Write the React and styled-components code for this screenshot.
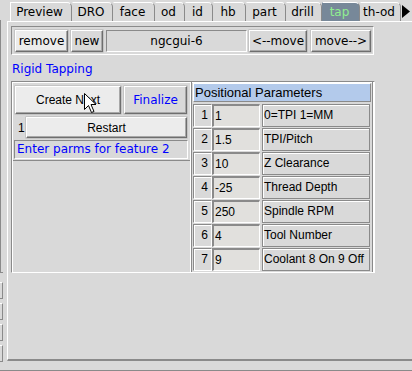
import styled, { createGlobalStyle } from "styled-components"

const Global = createGlobalStyle`
    html, body {
        margin: 0;
        padding: 0;
        background: #d9d9d9;
        overflow: hidden;
    }
    * {
        box-sizing: border-box;
    }
`

const DEJAVU = `"DejaVu Sans", "Noto Sans", sans-serif`
const ARIAL = `"Liberation Sans", Arial, sans-serif`
const DARK = "#8a8a8a"

const Screen = styled.div`
    position: relative;
    display: flex;
    width: 412px;
    height: 371px;
    border-bottom: 1px solid ${DARK};
    background: #d9d9d9;
`

const Strip = styled.div`
    display: flex;
    flex-direction: column;
    gap: 4px;
    width: 3px;
    padding-top: 20px;
`

const StripLine = styled.div`
    width: 3px;
    height: 253px;
    border-left: 1px solid ${DARK};
    border-bottom: 1px solid ${DARK};
    margin-bottom: 5px;
`

const StripBox = styled.div`
    width: 3px;
    height: 17px;
    border-top: 1px solid #fff;
    border-right: 1px solid ${DARK};
    border-bottom: 1px solid ${DARK};
`

const Notebook = styled.div`
    display: flex;
    flex-direction: column;
    margin-left: 4px;
    width: 405px;
`

const TabBar = styled.div`
    display: flex;
    align-items: flex-end;
    height: 21px;
    padding-left: 3px;
`

const Tab = styled.div`
    width: ${p => p.$w}px;
    height: 19px;
    display: flex;
    align-items: center;
    justify-content: center;
    padding-right: 3px;
    font-family: ${DEJAVU};
    font-size: 12px;
    color: ${p => p.$active ? "#90ee90" : "#000"};
    background: ${p => p.$active ? "#778899" : "#d9d9d9"};
    border-top: 1px solid #fff;
    border-left: 1px solid ${p => p.$first ? "#fff" : "transparent"};
    border-right: 1px solid ${DARK};
    border-top-right-radius: 5px;
`

const Arrow = styled.div`
    display: flex;
    align-items: center;
    width: 10px;
    height: 19px;
    margin-left: 1px;
`

const Page = styled.div`
    display: flex;
    flex-direction: column;
    height: 340px;
    padding: 4px 0 0 3px;
    border-top: 1px solid #fff;
    border-left: 1px solid #fff;
    border-bottom: 2px solid ${DARK};
`

const Toolbar = styled.div`
    display: flex;
    align-items: center;
    gap: 3px;
    width: 363px;
    height: 29px;
    padding: 2px 2px 2px 3px;
    border: 1px solid;
    border-color: ${DARK} #fff #fff ${DARK};
`

const Button = styled.button`
    flex: none;
    width: ${p => p.$w}px;
    height: ${p => p.$h || 22}px;
    padding: 0;
    margin-left: ${p => p.$ml || 0}px;
    background: ${p => p.$light ? "#ececec" : "#d9d9d9"};
    border: 1px solid;
    border-color: #fff #6e6e6e #6e6e6e #fff;
    box-shadow: inset -1px -1px 0 #a8a8a8, 0 0 0 0.5px #b0b0b0;
    font-family: ${p => p.$arial ? ARIAL : DEJAVU};
    font-size: 12px;
    color: ${p => p.$blue ? "#0000ff" : "#000"};
    cursor: pointer;
`

const NameField = styled.div`
    flex: none;
    width: 141px;
    height: 22px;
    display: flex;
    align-items: center;
    justify-content: center;
    border: 1px solid;
    border-color: ${DARK} #fff #fff ${DARK};
    font-family: ${DEJAVU};
    font-size: 12px;
`

const Title = styled.div`
    height: 26px;
    padding: 7px 0 0 1px;
    line-height: 14px;
    font-family: ${DEJAVU};
    font-size: 12px;
    color: #0000ff;
`

const Frame = styled.div`
    display: flex;
    width: 364px;
    height: 192px;
    padding: 1px 0 0 1px;
    border: 1px solid;
    border-color: ${DARK} #fff #fff ${DARK};
    box-shadow: inset 1px 1px 0 #fff;
`

const Controls = styled.div`
    display: flex;
    flex-direction: column;
    width: 177px;
    height: 78px;
    padding: 3px 0 0 1px;
    border-bottom: 1px solid ${DARK};
`

const ButtonRow = styled.div`
    display: flex;
    align-items: center;
    gap: 3px;
    padding-left: ${p => p.$pl || 0}px;
    margin-bottom: ${p => p.$mb || 0}px;
`

const Count = styled.div`
    width: 12px;
    padding-left: 4px;
    font-family: ${ARIAL};
    font-size: 12px;
`

const Status = styled.div`
    width: 174px;
    height: 19px;
    padding-left: 2px;
    line-height: 17px;
    border: 1px solid;
    border-color: ${DARK} #fff #fff ${DARK};
    font-family: ${DEJAVU};
    font-size: 12px;
    color: #0000ff;
`

const Params = styled.div`
    display: flex;
    flex-direction: column;
    gap: 1px;
    width: 184px;
    margin-left: auto;
    margin-top: -1px;
    padding: 1px 3px 0 2px;
    border-left: 1px solid #fff;
    box-shadow: inset 1px 0 0 ${DARK}, inset -1px 0 0 #fff, inset -2px 0 0 ${DARK};
`

const Header = styled.div`
    height: 19px;
    margin-bottom: 1px;
    padding-left: 1px;
    line-height: 18px;
    background: #b3caeb;
    border: 1px solid;
    border-color: #fff ${DARK} ${DARK} #fff;
    font-family: ${ARIAL};
    font-size: 13px;
`

const Row = styled.div`
    display: flex;
    height: 23px;
    font-family: ${ARIAL};
    font-size: 12px;
`

const Num = styled.div`
    width: 19px;
    padding-right: 3px;
    text-align: right;
    line-height: 21px;
    border: 1px solid;
    border-color: ${DARK} #fff #fff ${DARK};
    box-shadow: inset 1px 1px 0 #fff;
`

const Value = styled.div`
    width: 48px;
    padding-left: 1px;
    line-height: 20px;
    background: #e1e0dd;
    border-style: solid;
    border-width: 2px 1px 1px 2px;
    border-color: ${DARK} #fff #fff ${DARK};
`

const Desc = styled.div`
    width: 108px;
    margin-left: 2px;
    padding-left: 1px;
    line-height: 21px;
    white-space: nowrap;
    overflow: hidden;
    border: 1px solid;
    border-color: ${DARK} ${DARK} ${DARK} ${DARK};
    box-shadow: inset 1px 1px 0 #fff;
`

const Pointer = styled.svg`
    position: absolute;
    left: 84px;
    top: 93px;
`

const tabs = [
    ["Preview", 62], ["DRO", 41], ["face", 42], ["od", 30], ["id", 28],
    ["hb", 33], ["part", 40], ["drill", 36], ["tap", 38], ["th-od", 41],
]

const params = [
    ["1", "1", "0=TPI 1=MM"],
    ["2", "1.5", "TPI/Pitch"],
    ["3", "10", "Z Clearance"],
    ["4", "-25", "Thread Depth"],
    ["5", "250", "Spindle RPM"],
    ["6", "4", "Tool Number"],
    ["7", "9", "Coolant 8 On 9 Off"],
]

export default () => {
    return (
        <Screen>
            <Global/>
            <Strip>
                <StripLine/>
                <StripBox/>
                <StripBox/>
                <StripBox/>
                <StripBox/>
            </Strip>
            <Notebook>
                <TabBar>
                    {tabs.map(([name, w], i) =>
                        <Tab key={name} $w={w} $first={i === 0} $active={name === "tap"}>{name}</Tab>
                    )}
                    <Arrow>
                        <svg width="8" height="13" viewBox="0 0 8 13">
                            <polygon points="0,0 8,6.5 0,13" fill="#000"/>
                        </svg>
                    </Arrow>
                </TabBar>
                <Page>
                    <Toolbar>
                        <Button $w={53} $light>remove</Button>
                        <Button $w={32}>new</Button>
                        <NameField>ngcgui-6</NameField>
                        <Button $w={58} $ml={-1}>&lt;--move</Button>
                        <Button $w={60} $ml={1}>move--&gt;</Button>
                    </Toolbar>
                    <Title>Rigid Tapping</Title>
                    <Frame>
                        <Controls>
                            <ButtonRow $pl={1} $mb={3}>
                                <Button $w={106} $h={28} $light $arial>Create Next</Button>
                                <Button $w={63} $h={28} $blue>Finalize</Button>
                            </ButtonRow>
                            <ButtonRow $mb={2}>
                                <Count>1</Count>
                                <Button $w={161} $h={21} $light $arial style={{marginLeft: -3}}>Restart</Button>
                            </ButtonRow>
                            <Status>Enter parms for feature 2</Status>
                        </Controls>
                        <Params>
                            <Header>Positional Parameters</Header>
                            {params.map(([n, v, d]) =>
                                <Row key={n}>
                                    <Num>{n}</Num>
                                    <Value>{v}</Value>
                                    <Desc>{d}</Desc>
                                </Row>
                            )}
                        </Params>
                    </Frame>
                </Page>
            </Notebook>
            <Pointer width="13" height="21" viewBox="0 0 13 21">
                <polygon points="0.5,0.5 0.5,16.5 4.5,12.5 7.5,19.5 10,18.5 7,11.5 12,11.5"
                         fill="#fff" stroke="#000" strokeWidth="1"/>
            </Pointer>
        </Screen>
    )
}
